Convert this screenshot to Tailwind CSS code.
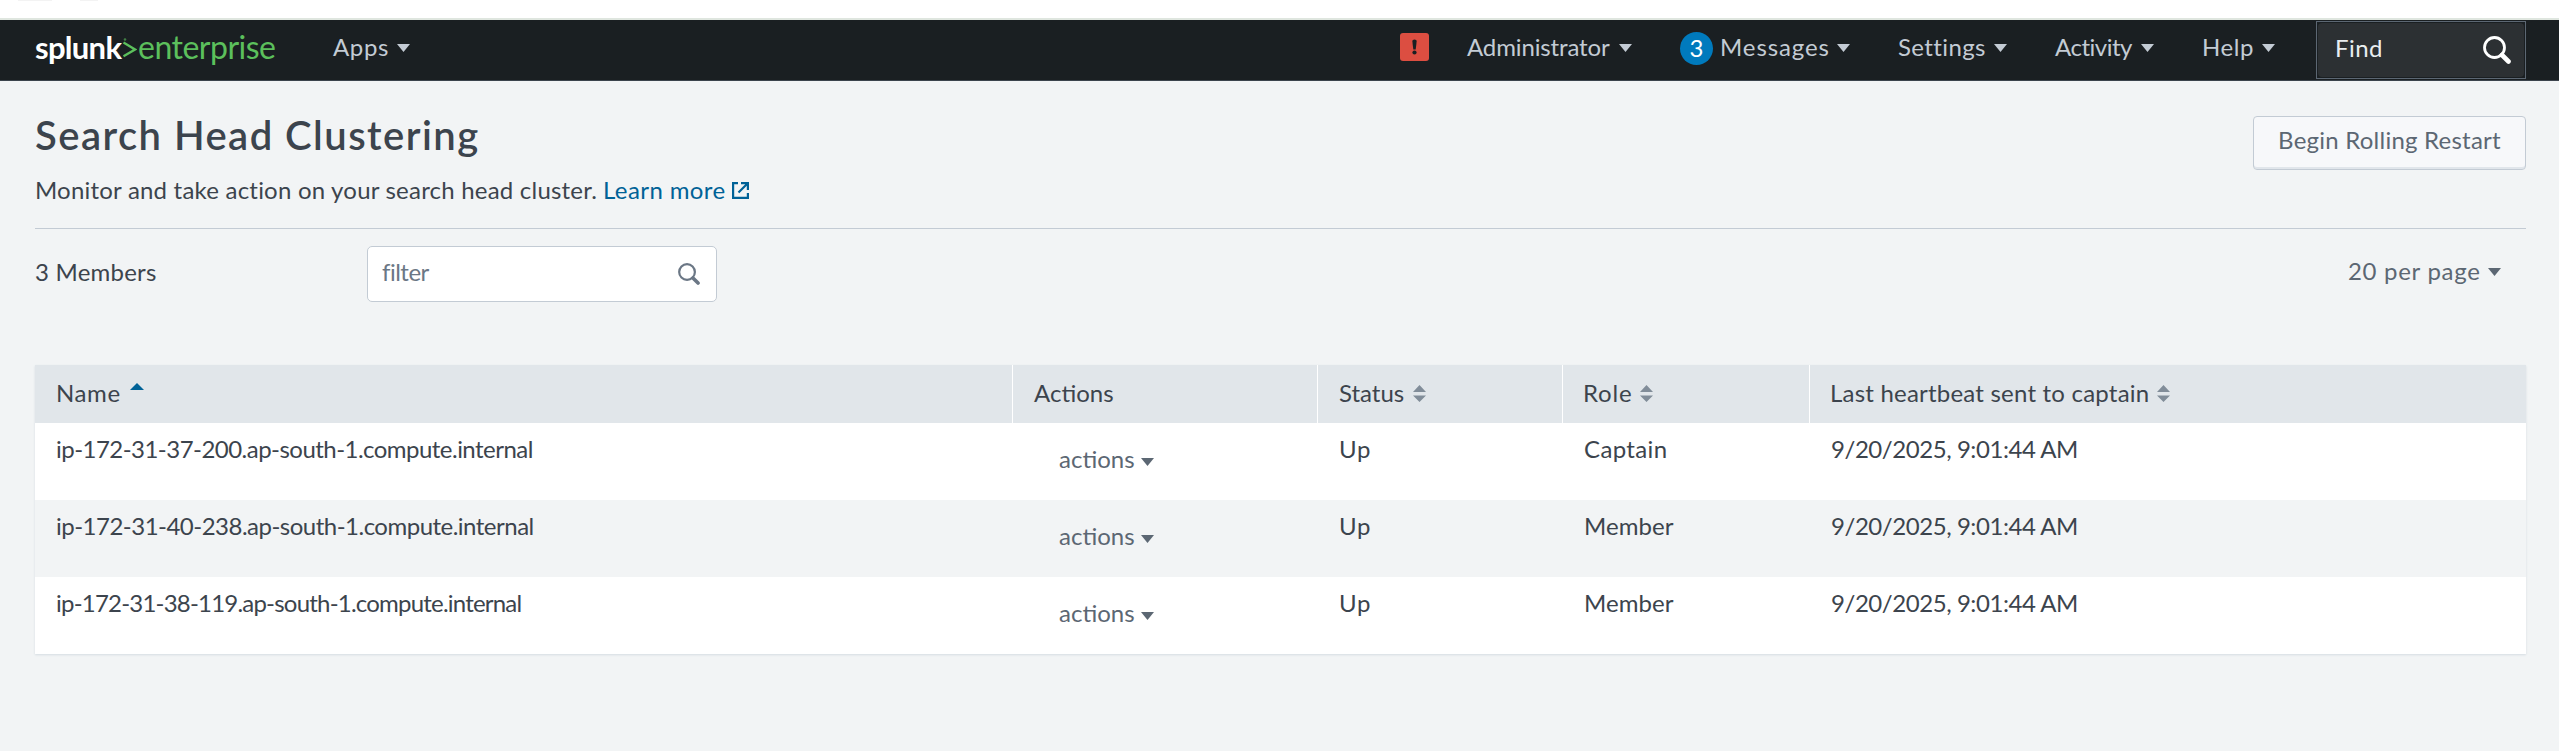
<!DOCTYPE html>
<html lang="en">
<head>
<meta charset="utf-8">
<title>Search Head Clustering</title>
<script src="https://cdn.jsdelivr.net/npm/@tailwindcss/browser@4"></script>
</head>
<body class="min-h-screen bg-[#f2f4f5] font-['Lato',sans-serif] text-2xl leading-7 text-[#3c444d] whitespace-nowrap overflow-x-hidden">
<svg class="hidden">
  <symbol id="caret" viewBox="0 0 13 8"><path d="M0 0h13L6.5 8z" fill="currentColor"/></symbol>
  <symbol id="sort" viewBox="0 0 13 17"><path d="M0 7h13L6.5 0zM0 10.500h13L6.500 17z" fill="currentColor"/></symbol>
  <symbol id="search" viewBox="0 0 28 28"><circle cx="11.500" cy="11.500" r="10" fill="none" stroke="currentColor" stroke-width="2.800"/><path d="M19 19l6.500 6.500" stroke="currentColor" stroke-width="4.600" stroke-linecap="round"/></symbol>
</svg>

<div class="h-[18px] bg-white flex pl-[18px] gap-7"><i class="h-px w-[34px] bg-[#f3f3f3]"></i><i class="h-px w-[18px] bg-[#f3f3f3]"></i></div>
<nav class="h-[63px] border-t-2 border-t-[#dfe6df] border-b border-b-[#3c444d] bg-[#1a1f22] text-[#c3cbd4] flex justify-between pl-[35px] pr-[33px]">
  <div class="flex pt-[13px]">
    <div class="w-[298px] flex">
      <span class="w-[87px] text-[31px] font-bold tracking-[-0.7px] text-white">splunk</span>
      <svg class="w-[15px] h-[20px] mt-[5px] text-[#5cc05c]" viewBox="0 0 15 20"><path d="M1.500 4.500L13 11.500 1.500 18.200" fill="none" stroke="currentColor" stroke-width="2.300"/><circle cx="3" cy="1.500" r="1.300" fill="currentColor" opacity=".6"/></svg>
      <span class="pl-px text-[32px] tracking-[-0.5px] text-[#5cc05c]">enterprise</span>
    </div>
    <div class="w-[77px] h-7 flex items-center justify-between"><span class="tracking-[0.63px]">Apps</span><svg class="w-[13px] h-2 mt-0.5"><use href="#caret"/></svg></div>
  </div>
  <div class="flex">
    <div class="w-[67px] pt-[13px]"><svg class="w-[29px] h-[28px]" viewBox="0 0 29 28"><rect width="29" height="28" rx="3" fill="#dc4e41"/><path d="M12.300 8q0-1.500 2.200-1.500T16.700 8l-1 8.500h-2.400z" fill="#1a1f22"/><circle cx="14.500" cy="19.500" r="2.100" fill="#1a1f22"/></svg></div>
    <div class="w-[213px] pt-[13px]"><div class="w-[165px] flex items-center justify-between"><span class="tracking-[-0.13px]">Administrator</span><svg class="w-[13px] h-2 mt-0.5"><use href="#caret"/></svg></div></div>
    <div class="w-[40px] pt-3"><div class="w-[33px] h-[33px] rounded-full bg-[#007abd] text-white text-center leading-[31px]">3</div></div>
    <div class="w-[178px] pt-[13px]"><div class="w-[130px] flex items-center justify-between"><span class="tracking-[0.9px]">Messages</span><svg class="w-[13px] h-2 mt-0.5"><use href="#caret"/></svg></div></div>
    <div class="w-[157px] pt-[13px]"><div class="w-[109px] flex items-center justify-between"><span class="tracking-[0.39px]">Settings</span><svg class="w-[13px] h-2 mt-0.5"><use href="#caret"/></svg></div></div>
    <div class="w-[147px] pt-[13px]"><div class="w-[99px] flex items-center justify-between"><span class="tracking-[-0.5px]">Activity</span><svg class="w-[13px] h-2 mt-0.5"><use href="#caret"/></svg></div></div>
    <div class="w-[114px] pt-[13px]"><div class="w-[73px] flex items-center justify-between"><span class="tracking-[0.57px]">Help</span><svg class="w-[13px] h-2 mt-0.5"><use href="#caret"/></svg></div></div>
    <div class="w-[210px] h-[58px] mt-px border border-[#5c6773] p-px"><div class="h-full rounded-[4px] bg-[#2c3033] text-[#e9edf0] flex justify-between pl-[17px] pr-[13px] pt-[11px]"><span class="tracking-[0.44px]">Find</span><svg class="w-7 h-7 mt-0.5 text-white"><use href="#search"/></svg></div></div>
  </div>
</nav>

<main class="pl-[35px] pr-[33px]">
  <header class="h-[148px] border-b border-[#c3cbd4] flex justify-between items-start">
    <div class="pt-[30px]">
      <h1 class="text-[40px] leading-[48px] font-semibold tracking-[1.45px]">Search Head Clustering</h1>
      <p class="mt-[17px] flex"><span class="w-[568px] tracking-[0.21px]">Monitor and take action on your search head cluster.</span><a class="w-[129px] text-[#006297] tracking-[0.4px]">Learn more</a><svg class="w-[17px] h-[17px] mt-1.5 text-[#006297]" viewBox="0 0 17 17" fill="none" stroke="currentColor" stroke-width="2.200"><path d="M6 1.100H1.100V15.900H15.900V11M9 1.100H15.900V8M15.500 1.500L6.500 10.500"/></svg></p>
    </div>
    <button class="mt-[35px] w-[273px] h-[54px] rounded-[4px] border border-[#c3cbd4] bg-[#f7f8fa] shadow-[inset_0_-2px_0_#e1e6eb] text-[#5c6773] tracking-[0.23px] pb-[6px]">Begin Rolling Restart</button>
  </header>
  <div class="h-[136px] pt-[17px] flex">
    <span class="w-[332px] pt-3 tracking-[0.23px]">3 Members</span>
    <div class="w-[350px] h-14 rounded-[5px] border border-[#c3cbd4] bg-white text-[#6b7785] flex justify-between pl-[14px] pr-4 pt-[11px]"><span class="tracking-[-0.5px]">filter</span><svg class="w-[22px] h-[22px] mt-[5px]"><use href="#search"/></svg></div>
    <div class="ml-auto mr-[25px] w-[153px] h-7 mt-[11px] flex items-center justify-between text-[#5c6773]"><span class="tracking-[0.7px]">20 per page</span><svg class="w-[13px] h-2 mt-0.5"><use href="#caret"/></svg></div>
  </div>

  <section class="shadow-[0_1px_2px_#d5dce2]">
    <div class="h-[58px] grid grid-cols-[977px_305px_245px_247px_1fr] bg-[#e1e6ea]">
      <div class="pl-[21px] pt-3.5 flex gap-[9px]"><span class="tracking-[0.6px]">Name</span><svg class="w-[14px] h-[7px] mt-1 text-[#006297]" viewBox="0 0 14 7"><path d="M0 7h14L7 0z" fill="currentColor"/></svg></div>
      <div class="border-l border-white pl-[21px] pt-3.5">Actions</div>
      <div class="border-l border-white pl-[21px] pt-3.5 flex gap-[9px]"><span>Status</span><svg class="w-[13px] h-[17px] mt-[6px] text-[#818d99]"><use href="#sort"/></svg></div>
      <div class="border-l border-white pl-[20px] pt-3.5 flex gap-[8px]"><span class="tracking-[0.82px]">Role</span><svg class="w-[13px] h-[17px] mt-[6px] text-[#818d99]"><use href="#sort"/></svg></div>
      <div class="border-l border-white pl-[20px] pt-3.5 flex gap-[8px]"><span class="tracking-[0.21px]">Last heartbeat sent to captain</span><svg class="w-[13px] h-[17px] mt-[6px] text-[#818d99]"><use href="#sort"/></svg></div>
    </div>
    <div class="h-[77px] grid grid-cols-[977px_305px_245px_247px_1fr] bg-white pt-3">
      <div class="pl-[21px] tracking-[-0.53px]">ip-172-31-37-200.ap-south-1.compute.internal</div>
      <div class="pl-[47px] pt-2.5 flex gap-[6px] text-[#5c6773]"><span>actions</span><svg class="w-[13px] h-2 mt-[13px]"><use href="#caret"/></svg></div>
      <div class="pl-[22px] tracking-[0.7px]">Up</div>
      <div class="pl-[22px] tracking-[0.35px]">Captain</div>
      <div class="pl-[22px] tracking-[-0.44px]">9/20/2025, 9:01:44 AM</div>
    </div>
    <div class="h-[77px] grid grid-cols-[977px_305px_245px_247px_1fr] bg-[#f2f4f5] pt-3">
      <div class="pl-[21px] tracking-[-0.51px]">ip-172-31-40-238.ap-south-1.compute.internal</div>
      <div class="pl-[47px] pt-2.5 flex gap-[6px] text-[#5c6773]"><span>actions</span><svg class="w-[13px] h-2 mt-[13px]"><use href="#caret"/></svg></div>
      <div class="pl-[22px] tracking-[0.7px]">Up</div>
      <div class="pl-[22px] tracking-[0.05px]">Member</div>
      <div class="pl-[22px] tracking-[-0.44px]">9/20/2025, 9:01:44 AM</div>
    </div>
    <div class="h-[77px] grid grid-cols-[977px_305px_245px_247px_1fr] bg-white pt-3">
      <div class="pl-[21px] tracking-[-0.79px]">ip-172-31-38-119.ap-south-1.compute.internal</div>
      <div class="pl-[47px] pt-2.5 flex gap-[6px] text-[#5c6773]"><span>actions</span><svg class="w-[13px] h-2 mt-[13px]"><use href="#caret"/></svg></div>
      <div class="pl-[22px] tracking-[0.7px]">Up</div>
      <div class="pl-[22px] tracking-[0.05px]">Member</div>
      <div class="pl-[22px] tracking-[-0.44px]">9/20/2025, 9:01:44 AM</div>
    </div>
  </section>
</main>
</body>
</html>
